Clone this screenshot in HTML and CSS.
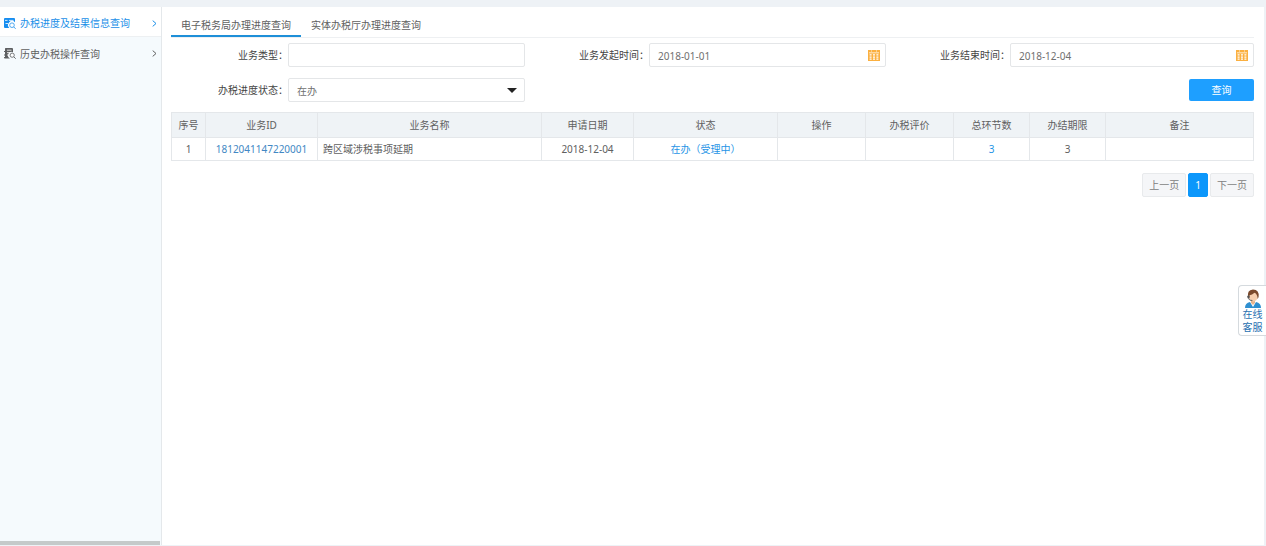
FILE: index.html
```html
<!DOCTYPE html>
<html lang="zh-CN">
<head>
<meta charset="utf-8">
<title>办税进度及结果信息查询</title>
<link rel="stylesheet" href="styles.css">
</head>
<body>
<div class="shell">
  <nav class="sidebar">
    <a class="nav-item active" href="#">
      <svg class="nav-icon" viewBox="0 0 12 11"><path fill="#168df0" d="M1 0h9q1 0 1 1v3.200A3.600 3.600 0 0 0 5.300 10H1q-1 0-1-1V1q0-1 1-1z"/><path stroke="#fff" stroke-width=".8" d="M1 2.400h2.500M5 2.400h4.500M1.500 5.500h2.500"/><circle cx="8" cy="7.200" r="2.300" fill="#fff" stroke="#3c9fee" stroke-width=".9"/><path stroke="#3c9fee" d="M9.700 8.900l1.900 1.900"/></svg>
      <span class="nav-text">办税进度及结果信息查询</span>
      <svg class="chevron" viewBox="0 0 5 7"><path fill="none" stroke="currentColor" d="M.7.6L4 3.500.7 6.400"/></svg>
    </a>
    <a class="nav-item" href="#">
      <svg class="nav-icon" viewBox="0 0 12 11"><path fill="#5d5f61" d="M1.500 0H8q1 0 1 1v3.200A3.300 3.300 0 0 0 6 10.500H1q-1 0-1-1V9h1V7.500H0v-1h1V4H0V3h1V.5z"/><path stroke="#fff" stroke-width=".8" d="M3 2.200h4.500M3 4.600h3M3 7h1.800"/><circle cx="8.200" cy="7.200" r="2.100" fill="#fff" stroke="#6a6c6e" stroke-width=".9"/><path stroke="#6a6c6e" d="M9.800 8.800l1.900 1.900"/></svg>
      <span class="nav-text">历史办税操作查询</span>
      <svg class="chevron" viewBox="0 0 5 7"><path fill="none" stroke="currentColor" d="M.7.6L4 3.500.7 6.400"/></svg>
    </a>
    <div class="scroll-thumb"></div>
  </nav>
  <main class="content">
    <div class="tabs" role="tablist">
      <button class="tab selected" type="button" role="tab" aria-selected="true">电子税务局办理进度查询</button>
      <button class="tab" type="button" role="tab" aria-selected="false">实体办税厅办理进度查询</button>
    </div>
    <form class="filters">
      <div class="field">
        <label for="type">业务类型：</label>
        <div class="control"><input id="type" type="text"></div>
      </div>
      <div class="field">
        <label for="start">业务发起时间：</label>
        <div class="control">
          <input id="start" type="text" value="2018-01-01">
          <svg class="calendar" viewBox="0 0 12 11"><path fill="#fbb040" d="M0 0h12v11H0z"/><path fill="#fff" d="M1 2.600h10v.7H1zM1.600 4.200h2v1.400h-2zM5 4.200h2v1.400H5zM8.400 4.200h2v1.400h-2zM1.600 6.400h2v1.400h-2zM5 6.400h2v1.400H5zM8.400 6.400h2v1.400h-2zM1.600 8.600h2v1.200h-2zM5 8.600h2v1.200H5zM8.400 8.600h2v1.200h-2zM3 .4h.8v1.200H3zM8.200.4H9v1.200h-.8z"/></svg>
        </div>
      </div>
      <div class="field">
        <label for="end">业务结束时间：</label>
        <div class="control">
          <input id="end" type="text" value="2018-12-04">
          <svg class="calendar" viewBox="0 0 12 11"><path fill="#fbb040" d="M0 0h12v11H0z"/><path fill="#fff" d="M1 2.600h10v.7H1zM1.600 4.200h2v1.400h-2zM5 4.200h2v1.400H5zM8.400 4.200h2v1.400h-2zM1.600 6.400h2v1.400h-2zM5 6.400h2v1.400H5zM8.400 6.400h2v1.400h-2zM1.600 8.600h2v1.200h-2zM5 8.600h2v1.200H5zM8.400 8.600h2v1.200h-2zM3 .4h.8v1.200H3zM8.200.4H9v1.200h-.8z"/></svg>
        </div>
      </div>
      <div class="field">
        <label for="state">办税进度状态：</label>
        <div class="control">
          <select id="state"><option>在办</option></select>
          <svg class="caret" viewBox="0 0 10 5"><path fill="#222" d="M0 0h10L5 5z"/></svg>
        </div>
      </div>
      <button class="search" type="button">查询</button>
    </form>
    <table class="results">
      <colgroup>
        <col class="c-no"><col class="c-id"><col class="c-name"><col class="c-date"><col class="c-state"><col class="c-act"><col class="c-act"><col class="c-num"><col class="c-num"><col class="c-note">
      </colgroup>
      <thead>
        <tr><th>序号</th><th>业务ID</th><th>业务名称</th><th>申请日期</th><th>状态</th><th>操作</th><th>办税评价</th><th>总环节数</th><th>办结期限</th><th>备注</th></tr>
      </thead>
      <tbody>
        <tr><td>1</td><td><a class="id-link" href="#">1812041147220001</a></td><td class="name">跨区域涉税事项延期</td><td>2018-12-04</td><td><a href="#">在办（受理中）</a></td><td></td><td></td><td><a href="#">3</a></td><td>3</td><td></td></tr>
      </tbody>
    </table>
    <div class="pager">
      <button class="page" type="button">上一页</button>
      <button class="page current" type="button">1</button>
      <button class="page" type="button">下一页</button>
    </div>
  </main>
</div>
<a class="service" href="#">
  <svg class="agent" viewBox="0 0 18 19"><path fill="#2e8fd0" d="M1 19q0-5 5-6h6q5 1 5 6z"/><path fill="#fff" d="M6 13l3 5 3-5z"/><path fill="#e9b48c" d="M7 11h4v3l-2 2-2-2z"/><ellipse cx="9.500" cy="7.500" rx="4.200" ry="5" fill="#f6cfae"/><path fill="#7b4a2c" d="M4.200 9Q2.500 1 9 .6q6.500.2 5.600 7.400l-1 2Q13.500 5 10.500 3.800 8 6 5.600 6.200L5.400 10z"/><path fill="none" stroke="#555" stroke-width=".9" d="M4.400 7v2.500q1 2.300 4 2"/><circle cx="4.400" cy="7.800" r="1.200" fill="#555"/></svg>
  <span>在线</span>
  <span>客服</span>
</a>
</body>
</html>
```
FILE: styles.css
```css
* { box-sizing: border-box; }
body {
  margin: 0;
  background: #eef2f6;
  color: #606060;
  font: 10px/14px "Noto Sans", "Noto Sans CJK SC", sans-serif;
}
button, input, select { font: inherit; color: inherit; }
a { color: #1e94e6; text-decoration: none; }
svg { display: block; flex: none; }

.shell {
  display: flex;
  min-height: 100vh;
  padding: 7px 2px 1px 0;
}
.sidebar {
  display: flex;
  flex-direction: column;
  flex: none;
  width: 162px;
  background: #f5fafd;
  border-right: 1px solid #e4e8eb;
}
.nav-item {
  display: flex;
  align-items: center;
  gap: 4px;
  height: 31px;
  padding: 3px 4px 0;
  border-bottom: 1px solid transparent;
  color: #606060;
}
.nav-item.active {
  height: 30px;
  background: #fff;
  border-bottom-color: #edf0f2;
  color: #1a8fe8;
}
.nav-icon { width: 12px; height: 11px; }
.nav-text { flex: 1; white-space: nowrap; }
.chevron { width: 5px; height: 7px; }
.scroll-thumb {
  width: 160px;
  height: 4px;
  margin-top: auto;
  background: #c5caca;
}

.content {
  flex: 1;
  min-width: 0;
  padding: 5px 10px 0 9px;
  background: #fff;
}
.tabs {
  display: flex;
  border-bottom: 1px solid #eef0f2;
}
.tab {
  height: 25px;
  padding: 2px 10px 0;
  border: 0;
  border-bottom: 2px solid transparent;
  background: none;
  white-space: nowrap;
}
.tab.selected { border-bottom-color: #1e8fd8; }

.filters {
  display: grid;
  grid-template-columns: repeat(3, 1fr);
  row-gap: 11px;
  padding: 5px 0 10px;
}
.field {
  display: flex;
  align-items: center;
  padding-right: 7px;
}
.field:nth-child(3) { padding-right: 0; }
.field label {
  width: 117px;
  flex: none;
  text-align: right;
  color: #444;
}
.control {
  display: flex;
  align-items: center;
  flex: 1;
  min-width: 0;
  height: 24px;
  padding-right: 5px;
  border: 1px solid #e4e6e8;
  border-radius: 2px;
}
.control input,
.control select {
  flex: 1;
  min-width: 0;
  height: 22px;
  padding: 2px 8px 0;
  border: 0;
  outline: 0;
  appearance: none;
  background: none;
  color: #707070;
}
.calendar { width: 12px; height: 11px; }
.caret { width: 10px; height: 5px; margin-right: 2px; }
.search {
  grid-column: 3;
  justify-self: end;
  align-self: center;
  width: 65px;
  height: 22px;
  padding: 0;
  border: 0;
  border-radius: 2px;
  background: #1e9fff;
  color: #fff;
}

.results {
  width: 100%;
  table-layout: fixed;
  border-collapse: collapse;
}
.results th,
.results td {
  height: 23px;
  padding: 0 5px;
  border: 1px solid #e4e7ea;
  text-align: center;
  font-weight: 400;
  white-space: nowrap;
}
.results th { height: 25px; background: #eff3f6; }
.results .name { text-align: left; }
.results .id-link { color: #4288c4; }
.c-no { width: 34px; }
.c-id { width: 112px; }
.c-name { width: 224px; }
.c-date { width: 92px; }
.c-state { width: 144px; }
.c-act { width: 88px; }
.c-num { width: 76px; }

.pager {
  display: flex;
  justify-content: flex-end;
  gap: 2px;
  padding-top: 12px;
}
.page {
  height: 24px;
  padding: 0 6px;
  border: 1px solid #e8eaec;
  border-radius: 2px;
  background: #f5f6f8;
  color: #808080;
}
.page.current {
  background: #0c97fb;
  border-color: #0c97fb;
  color: #fff;
}

.service {
  position: fixed;
  top: 285px;
  right: 0;
  display: flex;
  flex-direction: column;
  align-items: center;
  width: 28px;
  padding: 3px 0 1px;
  border: 1px solid #d5dade;
  border-right: 0;
  border-radius: 4px 0 0 4px;
  background: #fff;
  color: #1f6fb0;
  line-height: 13px;
}
.agent { width: 18px; height: 19px; }
```
